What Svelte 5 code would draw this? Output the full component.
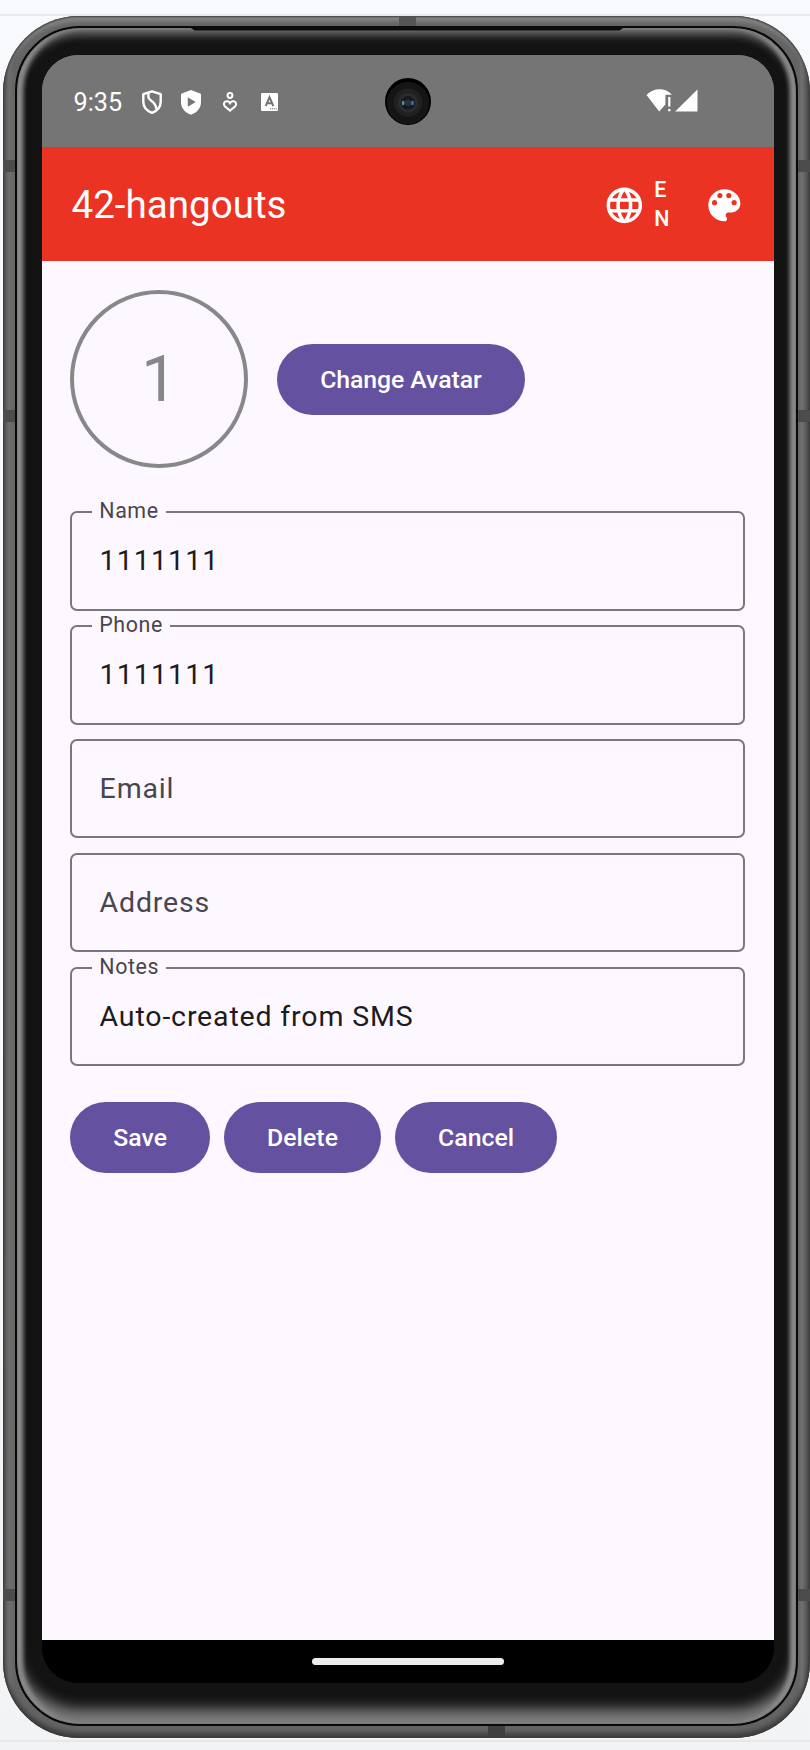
<script>
  const fields = [
    { label: 'Name', value: '1111111', numeric: true },
    { label: 'Phone', value: '1111111', numeric: true },
    { label: 'Email', value: '' },
    { label: 'Address', value: '' },
    { label: 'Notes', value: 'Auto-created from SMS' }
  ];
  const actions = ['Save', 'Delete', 'Cancel'];
</script>

<div class="page">
  <div class="device">
    <i class="seam top"></i>
    <i class="seam bottom"></i>
    {#each ['a', 'b', 'c'] as s}
      <i class="seam side left {s}"></i>
      <i class="seam side right {s}"></i>
    {/each}
    <i class="speaker"></i>
    <div class="bezel">
      <div class="screen">
        <div class="status">
          <span class="time">9:35</span>
          <svg class="ic shield" width="20" height="24" viewBox="0 0 20 24" fill="none" stroke="#fff" stroke-width="2.4" stroke-linejoin="round">
            <path d="M10 1.3 18.7 4.2V11.5C18.7 17 15 21 10 22.8 5 21 1.3 17 1.3 11.5V4.2Z" />
            <path d="M6.4 3V7.2C6.4 10.8 14.8 11.5 14.2 19.4" />
          </svg>
          <svg class="ic play" width="20" height="25" viewBox="0 0 20 25">
            <path fill="#fff" fill-rule="evenodd" d="M10 0 19.2 3.5Q20 3.8 20 4.8V12C20 18 16 22.7 10 24.7 4 22.7 0 18 0 12V4.8Q0 3.8.8 3.5ZM6.8 7.3V16.7L14.7 12Z" />
          </svg>
          <svg class="ic heart" width="14" height="20" viewBox="0 0 14 20" fill="none" stroke="#fff" stroke-width="2">
            <circle cx="7" cy="3.5" r="2.4" />
            <path d="M7 11.2C5.8 8.9 3.5 8.7 2 9.8.5 11.2.7 13.2 2 14.4L7 18.6 12 14.4C13.3 13.2 13.5 11.2 12 9.8 10.5 8.7 8.2 8.9 7 11.2Z" />
          </svg>
          <svg class="ic caps" width="17" height="18" viewBox="0 0 17 18">
            <rect width="17" height="18" rx="1.3" fill="#fff" />
            <path d="M4.7 13 8.5 4.3 12.3 13M6 10.2H11" fill="none" stroke="#757575" stroke-width="2" />
            <path d="M9 15.8H16" stroke="#757575" stroke-width="1" stroke-dasharray="1.2 .8" />
          </svg>
          <svg class="ic wifi" width="52" height="23" viewBox="0 0 52 23">
            <path fill="#fff" d="M.5 6C7.5-1.4 19-1.7 26 5.8H19.4V15.6L13.2 22.6Z" />
            <path fill="#fff" d="M22.2 8H24.4V17.6H22.2ZM22.2 20H24.4V22.3H22.2ZM51.5.5V22.5H29.2Z" />
          </svg>
          <svg class="camera" width="46" height="47" viewBox="0 0 46 47">
            <ellipse cx="23" cy="23.5" rx="23" ry="23.5" fill="#000" />
            <circle cx="23" cy="25" r="21.2" fill="#151515" />
            <circle cx="23" cy="24.5" r="14.3" fill="#202122" />
            <circle cx="23" cy="24.8" r="10" fill="#292b2d" />
            <circle cx="23" cy="24.8" r="6.8" fill="#17191e" />
            <ellipse cx="18.2" cy="25" rx="1.4" ry="2.3" fill="#5b8d96" />
            <ellipse cx="27.4" cy="25" rx="1.5" ry="2.3" fill="#5267b0" />
            <circle cx="23" cy="24.8" r="3.3" fill="#25313c" />
          </svg>
        </div>

        <header>
          <h1>42-hangouts</h1>
          <svg class="globe" width="42.7" height="42.7" viewBox="0 0 24 24" fill="#fff">
            <path d="M11.99 2C6.47 2 2 6.48 2 12s4.47 10 9.99 10C17.52 22 22 17.52 22 12S17.52 2 11.99 2zm6.93 6h-2.95c-.32-1.25-.78-2.45-1.38-3.56 1.84.63 3.37 1.91 4.33 3.56zM12 4.04c.83 1.2 1.48 2.53 1.91 3.96h-3.82c.43-1.43 1.08-2.76 1.91-3.96zM4.26 14C4.1 13.36 4 12.69 4 12s.1-1.36.26-2h3.38c-.08.66-.14 1.32-.14 2s.06 1.34.14 2H4.26zm.82 2h2.95c.32 1.25.78 2.45 1.38 3.56-1.84-.63-3.37-1.9-4.33-3.56zm2.95-8H5.08c.96-1.66 2.49-2.93 4.33-3.56C8.81 5.55 8.35 6.75 8.03 8zM12 19.96c-.83-1.2-1.48-2.53-1.91-3.96h3.82c-.43 1.43-1.08 2.76-1.91 3.96zM14.34 14H9.66c-.09-.66-.16-1.32-.16-2s.07-1.35.16-2h4.68c.09.65.16 1.32.16 2s-.07 1.34-.16 2zm.25 5.56c.6-1.11 1.06-2.31 1.38-3.56h2.95c-.96 1.65-2.49 2.93-4.33 3.56zM16.36 14c.08-.66.14-1.32.14-2s-.06-1.34-.14-2h3.38c.16.64.26 1.31.26 2s-.1 1.36-.26 2h-3.38z" />
          </svg>
          <span class="lang">EN</span>
          <svg width="42.7" height="42.7" viewBox="0 0 24 24" fill="#fff">
            <path d="M12 3c-4.97 0-9 4.03-9 9s4.03 9 9 9c.83 0 1.5-.67 1.5-1.5 0-.39-.15-.74-.39-1.01-.23-.26-.38-.61-.38-.99 0-.83.67-1.5 1.5-1.5H16c2.76 0 5-2.24 5-5 0-4.42-4.03-8-9-8zm-5.5 9c-.83 0-1.5-.67-1.5-1.5S5.67 9 6.5 9 8 9.67 8 10.5 7.33 12 6.5 12zm3-4C8.67 8 8 7.33 8 6.5S8.67 5 9.5 5s1.5.67 1.5 1.5S10.33 8 9.5 8zm5 0c-.83 0-1.5-.67-1.5-1.5S13.67 5 14.5 5s1.5.67 1.5 1.5S15.33 8 14.5 8zm3 4c-.83 0-1.5-.67-1.5-1.5S16.67 9 17.5 9s1.5.67 1.5 1.5-.67 1.5-1.5 1.5z" />
          </svg>
        </header>

        <main>
          <div class="avatar-row">
            <div class="avatar">1</div>
            <button class="change">Change Avatar</button>
          </div>
          <div class="form">
            {#each fields as f}
              <div class="field">
                {#if f.value}
                  <span class="label">{f.label}</span>
                  <span class="value" class:numeric={f.numeric}>{f.value}</span>
                {:else}
                  <span class="value hint">{f.label}</span>
                {/if}
              </div>
            {/each}
          </div>
          <div class="actions">
            {#each actions as a}
              <button>{a}</button>
            {/each}
          </div>
        </main>
        <div class="nav"><i></i></div>
      </div>
    </div>
  </div>
</div>

<style>
  :global(body) { margin: 0; }
  .page {
    box-sizing: border-box;
    width: 810px;
    height: 1750px;
    padding: 16px 0 0 3px;
    overflow: hidden;
    font-family: Roboto, sans-serif;
    background:
      linear-gradient(#e9eaec, #e9eaec) 0 14px / 100% 2px no-repeat,
      linear-gradient(#e6e7e9, #e6e7e9) 0 1740px / 100% 2px no-repeat,
      linear-gradient(#f7f9fc, #f7f9fc 60%, #f2f3f5);
  }
  .device {
    position: relative;
    box-sizing: border-box;
    height: 1722px;
    padding: 10px 12px 12px 12px;
    border-radius: 76px;
    background: linear-gradient(90deg, #555 0, #6e6e6e 6px, #646464 12px, #646464 795px, #707070 799px, #484848 100%);
    box-shadow: inset 0 0 2px 1px #3c3c3c, inset 0 9px 5px -4px #8a8a8a, inset 0 -5px 5px #3d3d3d;
  }
  .bezel {
    box-sizing: border-box;
    height: 1700px;
    padding: 27px 22px 0 25px;
    border: 2px solid #090909;
    border-radius: 65px;
    background: #131313;
    box-shadow:
      inset 0 0 1px 1px #777,
      inset 6px 0 4px 0 #8b8b8b,
      inset -6px 0 4px 0 #8b8b8b,
      inset 0 7px 8px 0 #6c6c6c,
      inset 0 -17px 13px -2px #7c7c7c;
  }
  .screen {
    display: flex;
    flex-direction: column;
    width: 732px;
    height: 1628px;
    overflow: hidden;
    border-radius: 36px;
    /* black under the rounded lower corners keeps their edges dark */
    background: linear-gradient(#757575 50%, #000 50%);
  }
  .seam {
    position: absolute;
    background: #555;
  }
  .seam.top { left: 396px; top: 1px; width: 17px; height: 10px; }
  .seam.bottom { left: 485px; bottom: 1px; width: 17px; height: 11px; background: #3e3e3e; }
  .side { width: 12px; height: 12px; background: #4c4c4c; }
  .left { left: 0; }
  .right { right: 0; }
  .a { top: 144px; }
  .b { top: 394px; }
  .c { top: 1573px; }
  .speaker {
    position: absolute;
    z-index: 2;
    left: 185px;
    top: 10px;
    width: 438px;
    height: 4.5px;
    background: #0b0b0b;
    clip-path: polygon(0 0, 100% 0, 98.5% 100%, 1.5% 100%);
  }
  .status {
    position: relative;
    display: flex;
    align-items: flex-start;
    box-sizing: border-box;
    height: 92px;
    padding-left: 31.5px;
    background: #757575;
    color: #fff;
  }
  .time { width: 68.5px; margin-top: 33px; font-size: 25.2px; line-height: 29px; }
  .ic { flex: none; }
  .shield { margin-top: 35px; }
  .play { margin: 34.5px 0 0 19px; }
  .heart { margin: 37px 0 0 22px; }
  .caps { margin: 38px 0 0 24px; }
  .wifi { margin: 34px 0 0 368px; }
  .camera { position: absolute; left: 343px; top: 23px; }
  header {
    display: flex;
    align-items: center;
    box-sizing: border-box;
    height: 114px;
    padding: 2px 28px 0 29.5px;
    background: #eb3323;
    color: #fff;
  }
  h1 { flex: 1; margin: 0; font-size: 38.6px; font-weight: 400; line-height: 50px; }
  .lang {
    width: 15px;
    margin: 0 34px 0 9px;
    font-size: 21.4px;
    font-weight: 500;
    line-height: 28.7px;
    letter-spacing: .5px;
    word-break: break-all;
  }
  main {
    flex: 1;
    padding: 28.5px 28.6px 0 28.3px;
    background: #fdf8ff;
  }
  .avatar-row { display: flex; align-items: center; gap: 28.5px; }
  .avatar {
    display: flex;
    align-items: center;
    justify-content: center;
    box-sizing: border-box;
    width: 178px;
    height: 178px;
    padding-top: 1px;
    border: 4px solid #888;
    border-radius: 50%;
    color: #888;
    font-size: 64px;
  }
  button {
    min-width: 139.5px;
    height: 71.2px;
    padding: 0 42.9px;
    border: 0;
    border-radius: 36px;
    background: #64519f;
    color: #fff;
    font: 500 24.8px/36px Roboto, sans-serif;
    letter-spacing: .06px;
  }
  .change { margin-top: 1.5px; padding: 1px 43.4px 0; letter-spacing: -.07px; }
  .form { display: flex; flex-direction: column; gap: 14.2px; margin-top: 43.5px; }
  .field {
    position: relative;
    display: flex;
    align-items: center;
    box-sizing: border-box;
    height: 99.7px;
    padding-left: 27.3px;
    border: 2px solid #7a757f;
    border-radius: 7px;
  }
  .label {
    position: absolute;
    left: 20px;
    top: -16px;
    padding: 0 7px;
    background: #fdf8ff;
    color: #49454f;
    font-size: 21.4px;
    line-height: 28px;
    letter-spacing: .58px;
  }
  .value { padding-top: 1px; color: #1d1b20; font-size: 28.5px; line-height: 42px; letter-spacing: .84px; }
  .numeric { letter-spacing: 1.1px; }
  .hint { color: #49454f; }
  .actions { display: flex; gap: 14.2px; margin-top: 36px; }
  .nav {
    display: flex;
    align-items: center;
    justify-content: center;
    height: 43px;
    background: #000;
  }
  .nav i { width: 192px; height: 7px; border-radius: 4px; background: #ececec; }
</style>
